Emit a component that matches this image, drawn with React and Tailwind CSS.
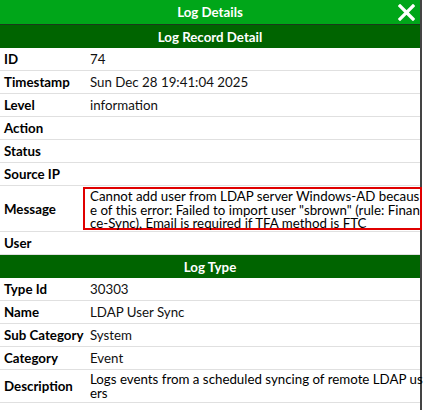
export default function App() {
  const Row = ({ label, value }) => (
    <div className="flex h-[23px] items-center border-b border-[#e0e0e0]">
      <div className="w-[90px] shrink-0 pl-[4px] font-bold text-black whitespace-nowrap">{label}</div>
      <div className="flex-1 pr-2 text-[#111]">{value}</div>
    </div>
  );
  const Head = ({ children }) => (
    <div className="flex h-[23px] items-center justify-center bg-[#006400] font-bold text-white">{children}</div>
  );
  return (
    <div className="w-[426px] h-[410px] bg-white text-[13.3px] leading-[16px]" style={{ fontFamily: "Lato, 'Open Sans', sans-serif" }}>
      <div className="w-[422px] border-r-2 border-[#444] h-[410px]">
        <div className="relative flex h-[25px] items-center justify-center bg-[#00a619] font-bold text-white border-b border-[#1a3a1a]">
          Log Details
          <svg className="absolute right-[5px] top-[4px]" width="17" height="17" viewBox="0 0 17 17">
            <path d="M2 2L15 15M15 2L2 15" stroke="white" strokeWidth="3.2" strokeLinecap="square" />
          </svg>
        </div>
        <Head>Log Record Detail</Head>
        <Row label="ID" value="74" />
        <Row label="Timestamp" value="Sun Dec 28 19:41:04 2025" />
        <Row label="Level" value="information" />
        <Row label="Action" value="" />
        <Row label="Status" value="" />
        <Row label="Source IP" value="" />
        <div className="flex items-center border-b border-[#e0e0e0] h-[46px]">
          <div className="w-[83px] shrink-0 pl-[4px] font-bold">Message</div>
          <div className="flex-1 border-2 border-[#e00000] h-[43px] pl-[5px] pt-[1px] leading-[13.5px] whitespace-nowrap mr-[2px]">
            Cannot add user from LDAP server Windows-AD becaus<br />
            e of this error: Failed to import user "sbrown" (rule: Finan<br />
            ce-Sync), Email is required if TFA method is FTC
          </div>
        </div>
        <Row label="User" value="" />
        <Head>Log Type</Head>
        <Row label="Type Id" value="30303" />
        <Row label="Name" value="LDAP User Sync" />
        <Row label="Sub Category" value="System" />
        <Row label="Category" value="Event" />
        <div className="flex h-[33px] items-center border-b border-[#e0e0e0]">
          <div className="w-[90px] shrink-0 pl-[4px] font-bold">Description</div>
          <div className="flex-1 whitespace-nowrap leading-[14px]">Logs events from a scheduled syncing of remote LDAP us<br />ers</div>
        </div>
      </div>
    </div>
  );
}
